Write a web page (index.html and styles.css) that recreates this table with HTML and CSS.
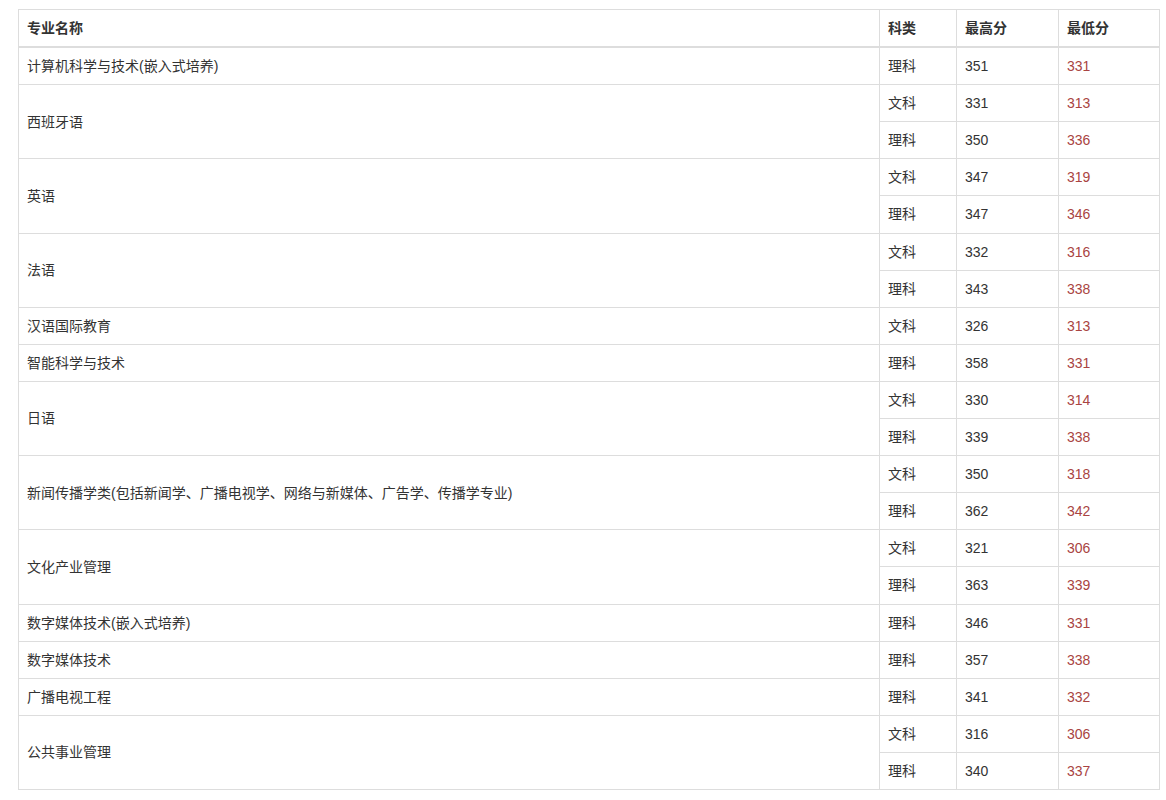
FILE: index.html
```html
<!DOCTYPE html>
<html lang="zh-CN">
<head>
<meta charset="utf-8">
<title>专业分数</title>
<link rel="stylesheet" href="styles.css">
</head>
<body>
<div class="wrap">
<table class="score-table">
<colgroup>
<col class="c-name"><col class="c-type"><col class="c-max"><col class="c-min">
</colgroup>
<thead>
<tr><th>专业名称</th><th>科类</th><th>最高分</th><th>最低分</th></tr>
</thead>
<tbody>
<tr><td>计算机科学与技术(嵌入式培养)</td><td>理科</td><td>351</td><td class="low">331</td></tr>
<tr><td rowspan="2">西班牙语</td><td>文科</td><td>331</td><td class="low">313</td></tr>
<tr><td>理科</td><td>350</td><td class="low">336</td></tr>
<tr><td rowspan="2">英语</td><td>文科</td><td>347</td><td class="low">319</td></tr>
<tr><td>理科</td><td>347</td><td class="low">346</td></tr>
<tr><td rowspan="2">法语</td><td>文科</td><td>332</td><td class="low">316</td></tr>
<tr><td>理科</td><td>343</td><td class="low">338</td></tr>
<tr><td>汉语国际教育</td><td>文科</td><td>326</td><td class="low">313</td></tr>
<tr><td>智能科学与技术</td><td>理科</td><td>358</td><td class="low">331</td></tr>
<tr><td rowspan="2">日语</td><td>文科</td><td>330</td><td class="low">314</td></tr>
<tr><td>理科</td><td>339</td><td class="low">338</td></tr>
<tr><td rowspan="2">新闻传播学类(包括新闻学、广播电视学、网络与新媒体、广告学、传播学专业)</td><td>文科</td><td>350</td><td class="low">318</td></tr>
<tr><td>理科</td><td>362</td><td class="low">342</td></tr>
<tr><td rowspan="2">文化产业管理</td><td>文科</td><td>321</td><td class="low">306</td></tr>
<tr><td>理科</td><td>363</td><td class="low">339</td></tr>
<tr><td>数字媒体技术(嵌入式培养)</td><td>理科</td><td>346</td><td class="low">331</td></tr>
<tr><td>数字媒体技术</td><td>理科</td><td>357</td><td class="low">338</td></tr>
<tr><td>广播电视工程</td><td>理科</td><td>341</td><td class="low">332</td></tr>
<tr><td rowspan="2">公共事业管理</td><td>文科</td><td>316</td><td class="low">306</td></tr>
<tr><td>理科</td><td>340</td><td class="low">337</td></tr>
</tbody>
</table>
</div>
</body>
</html>
```
FILE: styles.css
```css
html, body {
  margin: 0;
  padding: 0;
  background: #fff;
}
body {
  font-family: "Liberation Sans", Arial, "Noto Sans CJK SC", sans-serif;
  font-size: 14px;
  line-height: 20px;
  color: #333;
}
.wrap {
  padding: 9px 0 0 18px;
}
.score-table {
  width: 1141px;
  border-collapse: collapse;
  border-spacing: 0;
  table-layout: fixed;
  border: 1px solid #ddd;
}
.c-name { width: 861px; }
.c-type { width: 77px; }
.c-max { width: 102px; }
.c-min { width: 101px; }
.score-table th,
.score-table td {
  padding: 8px;
  border: 1px solid #ddd;
  text-align: left;
  vertical-align: middle;
  line-height: 20.1px;
}
.score-table th {
  font-weight: bold;
  border-bottom: 2px solid #ddd;
}
.score-table .low {
  color: #a94442;
}
```
